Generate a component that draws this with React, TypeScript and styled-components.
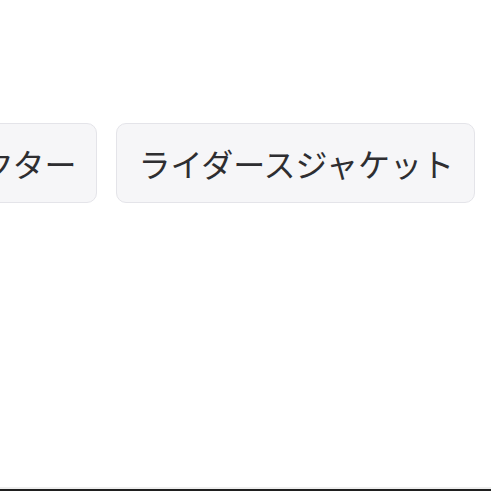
import styled, { createGlobalStyle } from "styled-components";

const GlobalStyle = createGlobalStyle`
  html, body {
    margin: 0;
    padding: 0;
    background: #ffffff;
  }
  body {
    font-family: "Noto Sans CJK JP", "Noto Sans", sans-serif;
  }
`;

const Page = styled.div`
  display: flex;
  flex-direction: column;
  height: 491px;
  overflow: hidden;
`;

const Main = styled.div`
  flex: 1;
  padding-top: 123px;
`;

// horizontally scrolled chip list, left chips clipped by the viewport
const ChipRow = styled.div`
  display: flex;
  justify-content: flex-end;
  gap: 19px;
  padding-right: 16px;
  overflow: hidden;
`;

const Chip = styled.button`
  flex-shrink: 0;
  display: flex;
  align-items: center;
  height: 80px;
  padding: 0 20px 0 21px;
  border: 1px solid #e4e4e9;
  border-radius: 10px;
  background: #f6f6f8;
  color: #2e2e31;
  font-family: "Noto Sans CJK JP", "Noto Sans", sans-serif;
  font-size: 32px;
  line-height: 48px;
  white-space: nowrap;
  cursor: pointer;
`;

const Footer = styled.div`
  height: 2px;
  border-top: 2px solid #eeeeee;
  background: #1f1f1f;
`;

const tags = ["プロテクター", "ライダースジャケット"];

const App = () => {
  return (
    <Page>
      <GlobalStyle />
      <Main>
        <ChipRow>
          {tags.map((t) => (
            <Chip key={t}>{t}</Chip>
          ))}
        </ChipRow>
      </Main>
      <Footer />
    </Page>
  );
};

export default App;
